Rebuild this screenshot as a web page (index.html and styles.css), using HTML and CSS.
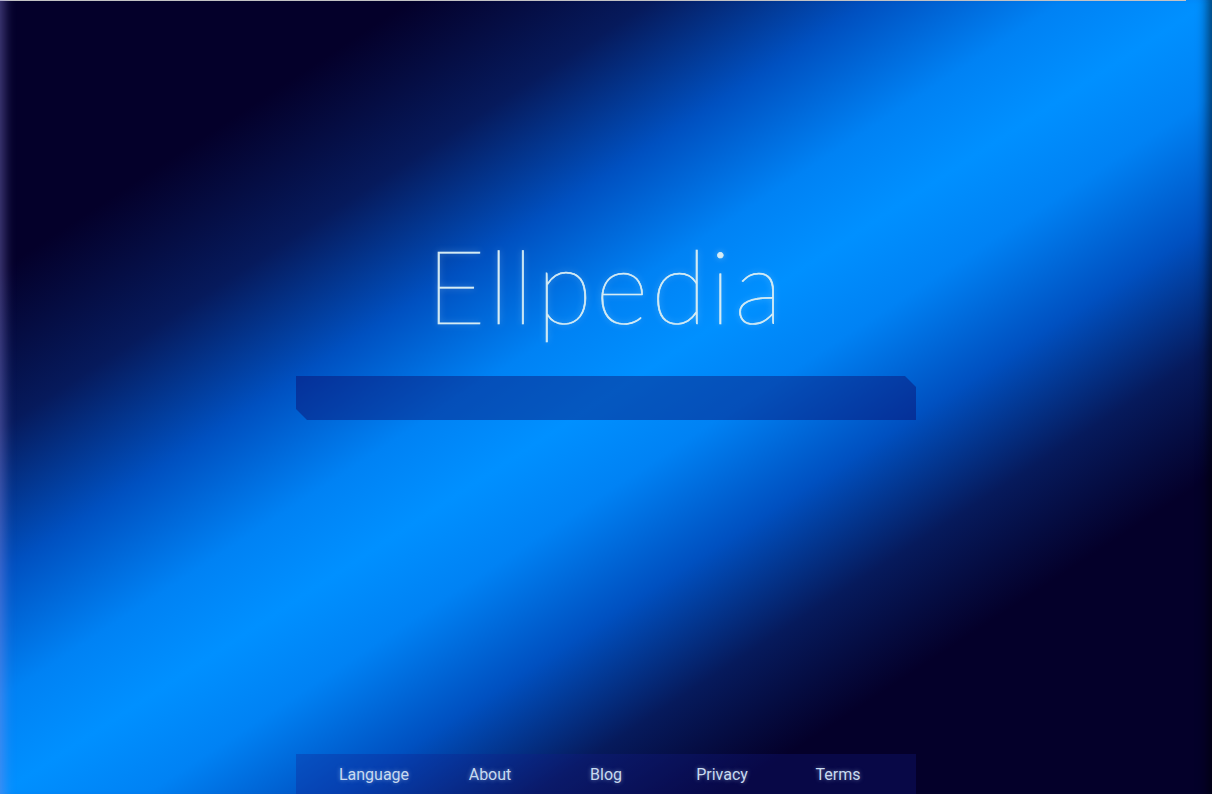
FILE: index.html
```html
<!DOCTYPE html>
<html lang="en">
<head>
<meta charset="utf-8">
<title>Ellpedia</title>
<link rel="stylesheet" href="styles.css">
</head>
<body>
<div class="page">
  <main class="hero">
    <h1 class="logo">Ellpedia</h1>
    <form class="search" role="search">
      <input class="search-input" type="text" aria-label="Search">
    </form>
  </main>
  <footer class="footer">
    <a class="footer-link" href="#">Language</a>
    <a class="footer-link" href="#">About</a>
    <a class="footer-link" href="#">Blog</a>
    <a class="footer-link" href="#">Privacy</a>
    <a class="footer-link" href="#">Terms</a>
  </footer>
</div>
</body>
</html>
```

FILE: styles.css
```css
html, body {
  margin: 0;
  padding: 0;
  height: 100%;
}

body {
  font-family: "Lato", "Open Sans", sans-serif;
  background:
    linear-gradient(#c8c8c8, #c8c8c8) no-repeat 0 0 / 1186px 1px,
    linear-gradient(to bottom right,
      #04002a 17%,
      #061a5c 27%,
      #0050c0 36%,
      #0082f4 44%,
      #0090ff 50%,
      #0082f4 56%,
      #0050c0 64%,
      #061a5c 72%,
      #04002a 80%);
  box-shadow:
    inset 14px 0 12px -10px rgba(150, 140, 230, 0.45),
    inset -14px 0 12px -10px rgba(0, 0, 0, 0.6);
  overflow: hidden;
}

.page {
  height: 100vh;
  display: flex;
  flex-direction: column;
  align-items: center;
}

.hero {
  display: flex;
  flex-direction: column;
  align-items: center;
  padding-top: 220px;
}

.logo {
  margin: 0;
  font-family: "Lato", sans-serif;
  font-weight: 100;
  font-size: 102px;
  line-height: 130px;
  letter-spacing: 3.2px;
  color: #d6ecf4;
  -webkit-text-stroke: 0.7px #d6ecf4;
  text-shadow: 0 0 6px rgba(210, 240, 255, 0.55);
}

.search {
  margin-top: 26px;
  width: 620px;
  height: 44px;
  background: rgba(12, 0, 94, 0.39);
  clip-path: polygon(0 0, 609px 0, 620px 11px, 620px 44px, 11px 44px, 0 33px);
}

.search-input {
  width: 100%;
  height: 100%;
  box-sizing: border-box;
  border: 0;
  outline: 0;
  background: transparent;
  padding: 0 16px;
  color: #ffffff;
  font: 18px "Lato", sans-serif;
}

.footer {
  margin-top: auto;
  width: 620px;
  height: 40px;
  box-sizing: border-box;
  padding: 0 20px;
  display: grid;
  grid-template-columns: repeat(5, 1fr);
  align-items: center;
  background: rgba(20, 26, 140, 0.3);
}

.footer-link {
  text-align: center;
  font-family: "Roboto", sans-serif;
  font-size: 16px;
  color: #c8daf0;
  text-decoration: none;
  text-shadow: 0 0 4px rgba(200, 230, 255, 0.5);
}
```
